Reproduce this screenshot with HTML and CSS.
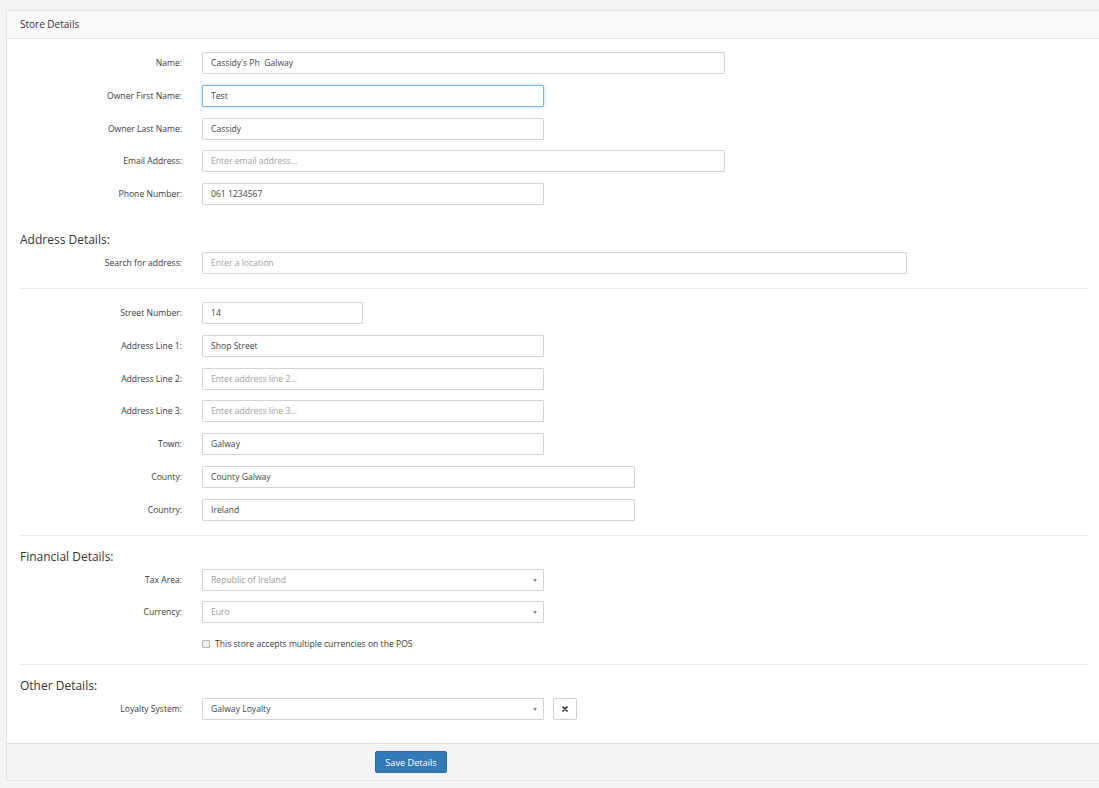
FILE: index.html
```html
<!DOCTYPE html>
<html>
<head>
<meta charset="utf-8">
<link rel="stylesheet" href="styles.css">
</head>
<body>
<div class="panel">
  <div class="panel-head">Store Details</div>
  <div class="panel-body">
    <div class="group">
      <div class="row"><label class="lbl">Name:</label><input class="inp w-lg" value="Cassidy's Ph  Galway"></div>
      <div class="row"><label class="lbl">Owner First Name:</label><input class="inp w-md focus" value="Test"></div>
      <div class="row"><label class="lbl">Owner Last Name:</label><input class="inp w-md" value="Cassidy"></div>
      <div class="row"><label class="lbl">Email Address:</label><input class="inp w-lg" placeholder="Enter email address..."></div>
      <div class="row"><label class="lbl">Phone Number:</label><input class="inp w-md" value="061 1234567"></div>
    </div>
    <h4 class="sect first">Address Details:</h4>
    <div class="group">
      <div class="row"><label class="lbl">Search for address:</label><input class="inp w-xl" placeholder="Enter a location"></div>
    </div>
    <hr class="div">
    <div class="group after-hr">
      <div class="row"><label class="lbl">Street Number:</label><input class="inp w-sm" value="14"></div>
      <div class="row"><label class="lbl">Address Line 1:</label><input class="inp w-md" value="Shop Street"></div>
      <div class="row"><label class="lbl">Address Line 2:</label><input class="inp w-md" placeholder="Enter address line 2..."></div>
      <div class="row"><label class="lbl">Address Line 3:</label><input class="inp w-md" placeholder="Enter address line 3..."></div>
      <div class="row"><label class="lbl">Town:</label><input class="inp w-md" value="Galway"></div>
      <div class="row"><label class="lbl">County:</label><input class="inp w-ml" value="County Galway"></div>
      <div class="row"><label class="lbl">Country:</label><input class="inp w-ml" value="Ireland"></div>
    </div>
    <hr class="div">
    <h4 class="sect">Financial Details:</h4>
    <div class="group">
      <div class="row"><label class="lbl">Tax Area:</label><div class="inp sel w-md muted">Republic of Ireland<span class="caret"></span></div></div>
      <div class="row"><label class="lbl">Currency:</label><div class="inp sel w-md muted">Euro<span class="caret"></span></div></div>
      <div class="row check-row"><span class="lbl"></span><span class="cbox"></span><span class="ctext">This store accepts multiple currencies on the POS</span></div>
    </div>
    <hr class="div tight">
    <h4 class="sect">Other Details:</h4>
    <div class="group">
      <div class="row"><label class="lbl">Loyalty System:</label><div class="inp sel w-md">Galway Loyalty<span class="caret"></span></div><button class="xbtn"><svg width="6" height="6" viewBox="0 0 6 6"><path d="M1 1L5 5M5 1L1 5" stroke="#222" stroke-width="1.6" stroke-linecap="round"/></svg></button></div>
    </div>
  </div>
  <div class="panel-foot"><button class="btn-save">Save Details</button></div>
</div>
</body>
</html>
```

FILE: styles.css
```css
html, body {
  margin: 0;
  padding: 0;
  overflow: hidden;
  background: #f4f4f4;
  font-family: "Open Sans", "Liberation Sans", sans-serif;
  color: #333;
}
.panel {
  margin: 10px -3px 0 6px;
  background: #fff;
  border: 1px solid #e2e2e2;
}
.panel-head {
  height: 27px;
  line-height: 27px;
  padding-left: 13px;
  background: #fafafa;
  border-bottom: 1px solid #e6e6e6;
  font-size: 10px;
  color: #333;
}
.panel-body {
  padding: 13px 13px 23px 13px;
}
.group {
  display: flex;
  flex-direction: column;
  gap: 10.75px;
}
.row {
  display: flex;
  align-items: center;
  height: 22px;
}
.lbl {
  width: 162px;
  flex: none;
  margin-right: 20px;
  text-align: right;
  font-size: 8.6px;
  color: #3a3a3a;
}
.inp {
  box-sizing: border-box;
  height: 22px;
  padding: 0 8px;
  border: 1px solid #d4d4d4;
  border-radius: 1px;
  background: #fff;
  font-family: "Open Sans", "Liberation Sans", sans-serif;
  font-size: 8.6px;
  color: #444;
  outline: none;
  margin: 0;
}
.inp::placeholder { color: #a0a0a0; }
.focus {
  border-color: #7cb4e6;
  box-shadow: 0 0 4px rgba(102, 175, 233, 0.45);
}
.w-sm { width: 161px; }
.w-md { width: 342px; }
.w-ml { width: 433px; }
.w-lg { width: 523px; }
.w-xl { width: 705px; }
.sel {
  position: relative;
  display: flex;
  align-items: center;
}
.muted { color: #9a9a9a; }
.caret {
  position: absolute;
  right: 6px;
  top: 9px;
  width: 0;
  height: 0;
  border-left: 2.5px solid transparent;
  border-right: 2.5px solid transparent;
  border-top: 3px solid #888;
}
.sect {
  margin: 0 0 4px 0;
  font-size: 12px;
  line-height: 16px;
  font-weight: normal;
  color: #333;
}
.sect.first { margin-top: 27px; }
.div {
  border: 0;
  border-top: 1px solid #e8e8e8;
  height: 0;
  margin: 14px 0 13px 0;
}
.after-hr { margin-top: 0; }
.div.tight { margin-top: 10px; }
.check-row { height: 20px; }
.cbox {
  box-sizing: border-box;
  width: 8px;
  height: 8px;
  border: 1px solid #b5b5b5;
  border-radius: 1px;
  background: #f0f0f0;
  margin-right: 5px;
}
.ctext { font-size: 8.6px; color: #3a3a3a; }
.xbtn {
  box-sizing: border-box;
  width: 24px;
  height: 22px;
  margin-left: 9px;
  padding: 0;
  border: 1px solid #cfcfcf;
  border-radius: 2px;
  background: #fff;
  display: flex;
  align-items: center;
  justify-content: center;
}
.panel-foot {
  display: flex;
  align-items: center;
  box-sizing: border-box;
  height: 37px;
  background: #f4f4f4;
  border-top: 1px solid #dedede;
  padding-left: 368px;
}
.btn-save {
  display: block;
  box-sizing: border-box;
  width: 72px;
  height: 22px;
  padding: 0;
  background: #337ab7;
  border: 1px solid #2e6da4;
  border-radius: 2px;
  color: #fff;
  font-family: "Open Sans", "Liberation Sans", sans-serif;
  font-size: 9.2px;
}
```
